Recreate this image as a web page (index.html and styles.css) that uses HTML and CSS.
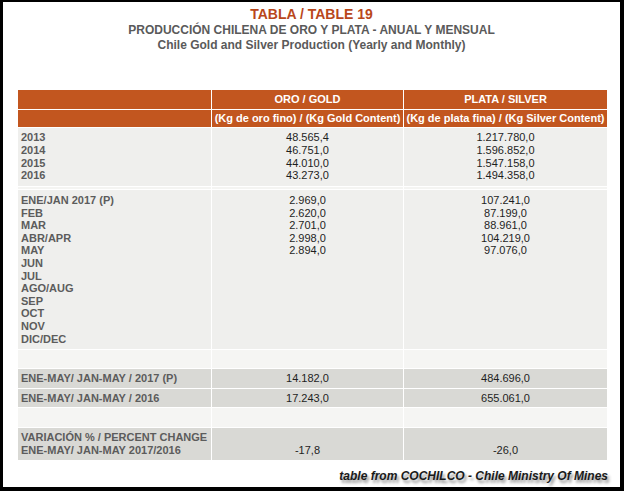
FILE: index.html
```html
<!DOCTYPE html>
<html lang="es">
<head>
<meta charset="utf-8">
<title>Tabla 19</title>
<link rel="stylesheet" href="styles.css">
</head>
<body>
<div class="frame">
  <header class="titles">
    <h1 class="title">TABLA / TABLE 19</h1>
    <p class="subtitle">PRODUCCIÓN CHILENA DE ORO Y PLATA - ANUAL Y MENSUAL</p>
    <p class="subtitle">Chile Gold and Silver Production (Yearly and Monthly)</p>
  </header>
  <table class="data">
    <colgroup>
      <col class="c-label">
      <col class="c-gold">
      <col class="c-silver">
    </colgroup>
    <thead>
      <tr class="h1">
        <th></th>
        <th>ORO / GOLD</th>
        <th>PLATA / SILVER</th>
      </tr>
      <tr class="h2">
        <th></th>
        <th>(Kg de oro fino) / (Kg Gold Content)</th>
        <th>(Kg de plata fina) / (Kg Silver Content)</th>
      </tr>
    </thead>
    <tbody>
      <tr class="block years">
        <td class="label">2013<br>2014<br>2015<br>2016</td>
        <td class="num">48.565,4<br>46.751,0<br>44.010,0<br>43.273,0</td>
        <td class="num">1.217.780,0<br>1.596.852,0<br>1.547.158,0<br>1.494.358,0</td>
      </tr>
      <tr class="spacer">
        <td></td><td></td><td></td>
      </tr>
      <tr class="block months">
        <td class="label">ENE/JAN 2017 (P)<br>FEB<br>MAR<br>ABR/APR<br>MAY<br>JUN<br>JUL<br>AGO/AUG<br>SEP<br>OCT<br>NOV<br>DIC/DEC</td>
        <td class="num">2.969,0<br>2.620,0<br>2.701,0<br>2.998,0<br>2.894,0</td>
        <td class="num">107.241,0<br>87.199,0<br>88.961,0<br>104.219,0<br>97.076,0</td>
      </tr>
      <tr class="empty e1">
        <td></td><td></td><td></td>
      </tr>
      <tr class="sum s1">
        <td class="label">ENE-MAY/ JAN-MAY / 2017 (P)</td>
        <td class="num">14.182,0</td>
        <td class="num">484.696,0</td>
      </tr>
      <tr class="sum s2">
        <td class="label">ENE-MAY/ JAN-MAY / 2016</td>
        <td class="num">17.243,0</td>
        <td class="num">655.061,0</td>
      </tr>
      <tr class="empty e2">
        <td></td><td></td><td></td>
      </tr>
      <tr class="sum var">
        <td class="label">VARIACIÓN % / PERCENT CHANGE<br>ENE-MAY/ JAN-MAY 2017/2016</td>
        <td class="num">-17,8</td>
        <td class="num">-26,0</td>
      </tr>
    </tbody>
  </table>
  <p class="source">table from COCHILCO - Chile Ministry Of Mines</p>
</div>
</body>
</html>
```

FILE: styles.css
```css
html, body {
  margin: 0;
  padding: 0;
  background: #000;
}

.frame {
  box-sizing: border-box;
  width: 624px;
  height: 491px;
  background: #fff;
  border-style: solid;
  border-color: #000;
  border-width: 2px 4px 4px 3px;
  font-family: "Liberation Sans", Arial, sans-serif;
  overflow: hidden;
}

.titles {
  text-align: center;
  padding-top: 4px;
}

.title {
  margin: 0 0 1px;
  font-size: 14px;
  line-height: 16px;
  font-weight: bold;
  color: #b9471b;
}

.subtitle {
  margin: 0;
  font-size: 12px;
  line-height: 15px;
  font-weight: bold;
  color: #5a5a5a;
}

.data {
  margin: 37px 0 0 15px;
  width: 589px;
  border-collapse: separate;
  border-spacing: 0;
  table-layout: fixed;
  font-size: 11px;
}

.c-label { width: 193px; }
.c-gold { width: 192px; }
.c-silver { width: 204px; }

.data th,
.data td {
  padding: 0;
  vertical-align: middle;
}

.data th + th,
.data td + td {
  border-left: 1px solid #fff;
}

.data tr + tr > th,
.data tbody td {
  border-top: 1px solid #fff;
}

.data th {
  background: #c2561f;
  color: #fff;
  font-weight: bold;
  text-align: center;
  line-height: 13px;
}

.h1 th { height: 19px; }
.h2 th { height: 17px; }

.label {
  padding-left: 3px !important;
  font-weight: bold;
  color: #5c5c5c;
  text-align: left;
}

.num {
  text-align: center;
  color: #1e1e1e;
}

.block td {
  background: #efefed;
  vertical-align: top;
}

.years td {
  height: 51px;
  line-height: 12.75px;
  padding: 3px 0 4px;
}

.months td {
  height: 151px;
  line-height: 12.6px;
  padding: 4px 0 4px;
}

.spacer td {
  height: 2px;
  background: #f4f4f2;
}

.empty td {
  background: #f5f5f3;
}

.e1 td { height: 18px; }
.e2 td { height: 19px; }

.sum td {
  background: #d9d9d5;
  line-height: 13px;
}

.s1 td { height: 19px; }
.s2 td { height: 18px; }

.var td {
  height: 26px;
  padding: 3px 0 3px;
  vertical-align: bottom;
}

.source {
  margin: 9px 12px 0 0;
  text-align: right;
  font-size: 12px;
  line-height: 14px;
  font-weight: bold;
  font-style: italic;
  color: #1a1a1a;
  text-shadow: 2px 3px 3px rgba(0, 0, 0, 0.45);
}
```
